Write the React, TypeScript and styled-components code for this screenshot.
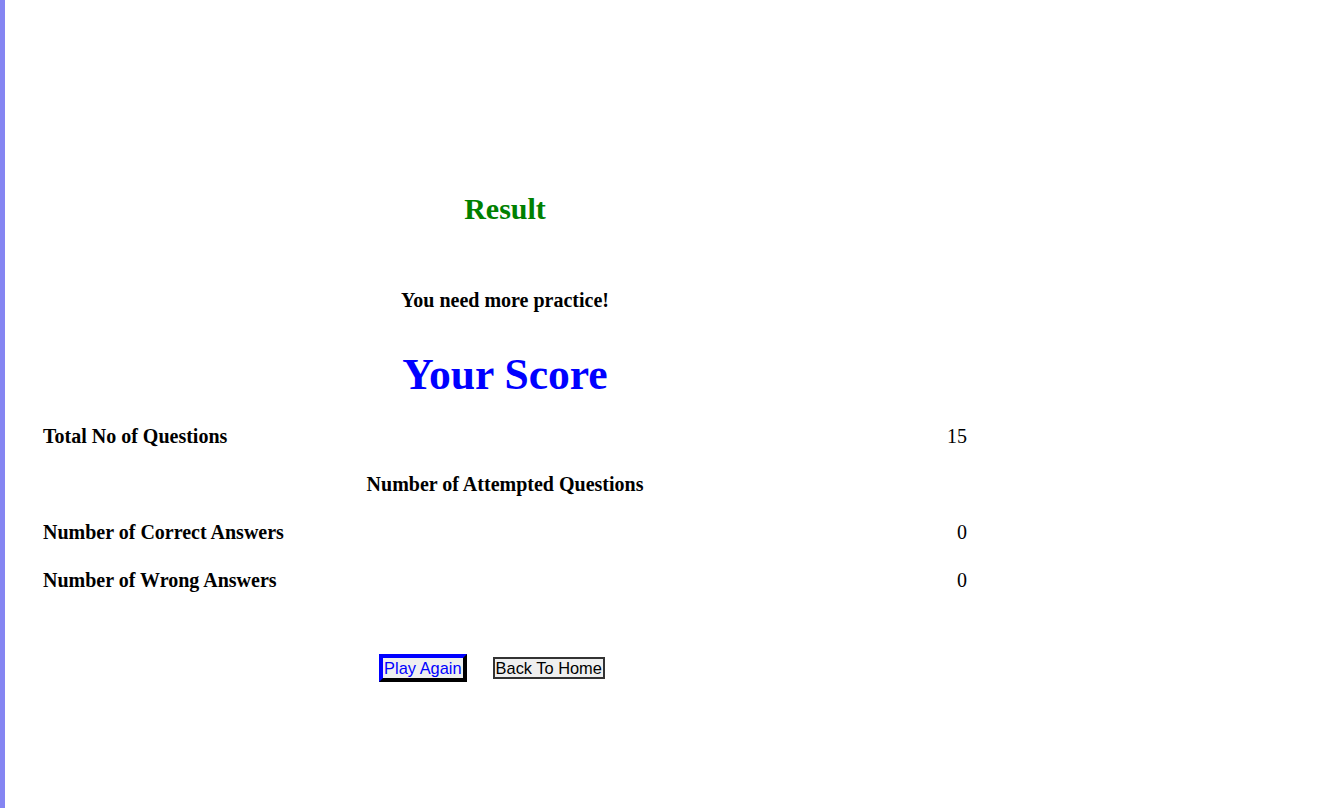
import React from "react";
import styled, { createGlobalStyle } from "styled-components";

const GlobalStyle = createGlobalStyle`
  html, body { margin: 0; padding: 0; background: #ffffff; }
  body { font-family: "Liberation Serif", "Times New Roman", serif; color: #000; }
`;

const Page = styled.div`
  min-height: 808px;
  border-left: 5px solid #8585f2;
  box-sizing: border-box;
`;

const Content = styled.main`
  width: 1000px;
  padding-top: 191px;
  display: flex;
  flex-direction: column;
  align-items: center;
`;

const Title = styled.h2`
  margin: 0;
  font-size: 30px;
  line-height: 36px;
  font-weight: bold;
  color: #008000;
`;

const Message = styled.h3`
  margin: 61px 0 0;
  font-size: 20px;
  line-height: 24px;
  font-weight: bold;
`;

const ScoreHeading = styled.h1`
  margin: 37px 0 0;
  font-size: 43.6px;
  line-height: 50px;
  font-weight: bold;
  color: #0000ff;
`;

const Table = styled.div`
  margin-top: 13px;
  width: 934px;
  display: flex;
  flex-direction: column;
`;

const Row = styled.div<{ $centered?: boolean }>`
  height: 48px;
  padding: 0 5px;
  display: flex;
  align-items: center;
  justify-content: ${(p) => (p.$centered ? "center" : "space-between")};
  font-size: 20px;
  line-height: 24px;
`;

const Label = styled.span`
  font-weight: bold;
`;

const Value = styled.span`
  font-weight: normal;
`;

const Buttons = styled.div`
  margin-top: 50px;
  margin-right: 26px;
  display: flex;
  align-items: center;
  gap: 26px;
`;

const Button = styled.button<{ $primary?: boolean }>`
  font-family: "Liberation Sans", Arial, sans-serif;
  font-size: 16.4px;
  line-height: 18px;
  background: #efefef;
  padding: ${(p) => (p.$primary ? "1px 1px" : "0 1px")};
  border-style: solid;
  border-width: ${(p) => (p.$primary ? "4px" : "2px")};
  border-color: ${(p) =>
    p.$primary ? "#0000ff #000000 #000000 #0000ff" : "#333333"};
  color: ${(p) => (p.$primary ? "#0000ff" : "#000000")};
  border-radius: 0;
  cursor: pointer;
  margin: 0;
`;

export default function App() {
  return (
    <>
      <GlobalStyle />
      <Page>
        <Content>
          <Title>Result</Title>
          <Message>You need more practice!</Message>
          <ScoreHeading>Your Score</ScoreHeading>
          <Table>
            <Row>
              <Label>Total No of Questions</Label>
              <Value>15</Value>
            </Row>
            <Row $centered>
              <Label>Number of Attempted Questions</Label>
            </Row>
            <Row>
              <Label>Number of Correct Answers</Label>
              <Value>0</Value>
            </Row>
            <Row>
              <Label>Number of Wrong Answers</Label>
              <Value>0</Value>
            </Row>
          </Table>
          <Buttons>
            <Button $primary>Play Again</Button>
            <Button>Back To Home</Button>
          </Buttons>
        </Content>
      </Page>
    </>
  );
}
